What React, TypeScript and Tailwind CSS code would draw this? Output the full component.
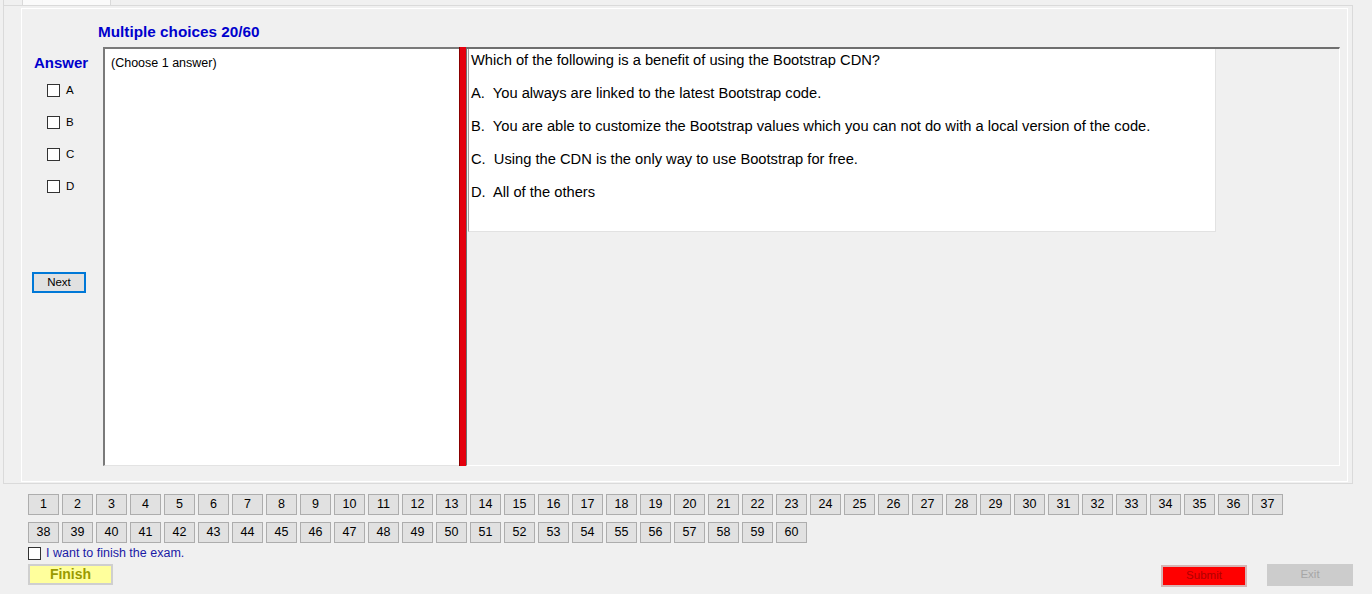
import React from 'react';

// exam window: question pane, answer checkboxes, question navigator, finish/submit bar

const row1 = Array.from({ length: 37 }, (_, i) => i + 1);
const row2 = Array.from({ length: 23 }, (_, i) => i + 38);

const options = [
    'A.  You always are linked to the latest Bootstrap code.',
    'B.  You are able to customize the Bootstrap values which you can not do with a local version of the code.',
    'C.  Using the CDN is the only way to use Bootstrap for free.',
    'D.  All of the others',
];

function Box() {
    return <div className="w-[13px] h-[13px] border border-[#333333] bg-white shrink-0" />;
}

function NumButton({ n }: { n: number }) {
    return (
        <div className="w-[31px] h-[21px] border border-[#adadad] bg-[#e1e1e1] flex items-center justify-center text-[12.5px] leading-none text-black">
            {n}
        </div>
    );
}

export default function App() {
    return (
        <div className="w-[1372px] h-[594px] bg-[#f0f0f0] overflow-hidden font-['Liberation_Sans',Arial,sans-serif] text-black">
            {/* Tab strip */}
            <div className="flex h-[5px]">
                <div className="ml-[3px] w-[1px] bg-[#d9d9d9]" />
                <div className="ml-[18px] w-[89px] bg-[#fafafa] border-x border-[#d9d9d9]" />
            </div>

            {/* Tab page */}
            <div className="ml-[3px] w-[1350px] h-[479px] border border-[#dadada] pt-[2px] pl-[17px]">
                <div className="w-[1327px] h-[474px] border border-white">
                    <div className="ml-[76px] mt-[14px] h-[18px] leading-[18px] text-[15.3px] font-bold text-[#0000cd]">
                        Multiple choices 20/60
                    </div>

                    <div className="mt-[6px] flex h-[419px]">
                        {/* Answer column */}
                        <div className="w-[81px] shrink-0 flex flex-col">
                            <div className="mt-[7px] pl-[12px] h-[18px] leading-[18px] text-[15px] font-bold text-[#0000cd]">
                                Answer
                            </div>
                            <div className="mt-[12px] pl-[25px] flex flex-col gap-[19px]">
                                {['A', 'B', 'C', 'D'].map(l => (
                                    <div key={l} className="flex items-center h-[13px]">
                                        <Box />
                                        <span className="ml-[6px] text-[11.5px] leading-none">{l}</span>
                                    </div>
                                ))}
                            </div>
                            <div className="mt-[79px] ml-[10px] w-[54px] h-[21px] border-2 border-[#0078d7] bg-[#e1e1e1] flex items-center justify-center text-[11.5px]">
                                Next
                            </div>
                        </div>

                        {/* Instruction box */}
                        <div className="w-[356px] shrink-0 bg-white border-l-2 border-t-2 border-[#7a7a7a] border-b border-b-[#e3e3e3] pl-[6px] pt-[7px] text-[12.5px] leading-[15px]">
                            (Choose 1 answer)
                        </div>

                        {/* Red divider */}
                        <div className="w-[7px] shrink-0 bg-[#e4000e] border-l border-[#8a0000]" />

                        {/* Question pane */}
                        <div className="w-[874px] shrink-0 border-t-2 border-l border-[#6f6f6f] border-r border-r-white border-b border-b-white pl-[1px]">
                            <div className="w-[748px] h-[183px] bg-white border-l border-l-[#a0a0a0] border-r border-b border-[#e2e2e2] pl-[2px] pt-[3px] text-[14.7px] leading-[17px]">
                                <div>Which of the following is a benefit of using the Bootstrap CDN?</div>
                                {options.map(o => (
                                    <div key={o} className="mt-[16px] whitespace-pre">{o}</div>
                                ))}
                            </div>
                        </div>
                    </div>
                </div>
            </div>

            {/* Question navigator */}
            <div className="mt-[10px] pl-[28px] flex flex-col gap-[7px]">
                <div className="flex gap-[3px]">
                    {row1.map(n => <NumButton key={n} n={n} />)}
                </div>
                <div className="flex gap-[3px]">
                    {row2.map(n => <NumButton key={n} n={n} />)}
                </div>
            </div>

            <div className="mt-[3px] pl-[28px] flex items-center h-[14px]">
                <Box />
                <span className="ml-[5px] text-[12.5px] leading-none text-[#1a1aa6]">I want to finish the exam.</span>
            </div>

            {/* Action bar */}
            <div className="mt-[4px] pl-[28px] pr-[19px] flex items-start">
                <div className="w-[85px] h-[21px] border-2 border-[#cfcfcf] bg-[#ffff9c] flex items-center justify-center text-[14px] font-bold text-[#9a9a00]">
                    Finish
                </div>
                <div className="ml-auto mt-[1px] w-[86px] h-[22px] border-2 border-[#d6b4b4] bg-[#ff0000] flex items-center justify-center text-[11.5px] text-[#b00000]">
                    Submit
                </div>
                <div className="ml-[20px] w-[86px] h-[22px] bg-[#cccccc] flex items-center justify-center text-[11.5px] text-[#a6a6a6]">
                    Exit
                </div>
            </div>
        </div>
    );
}
